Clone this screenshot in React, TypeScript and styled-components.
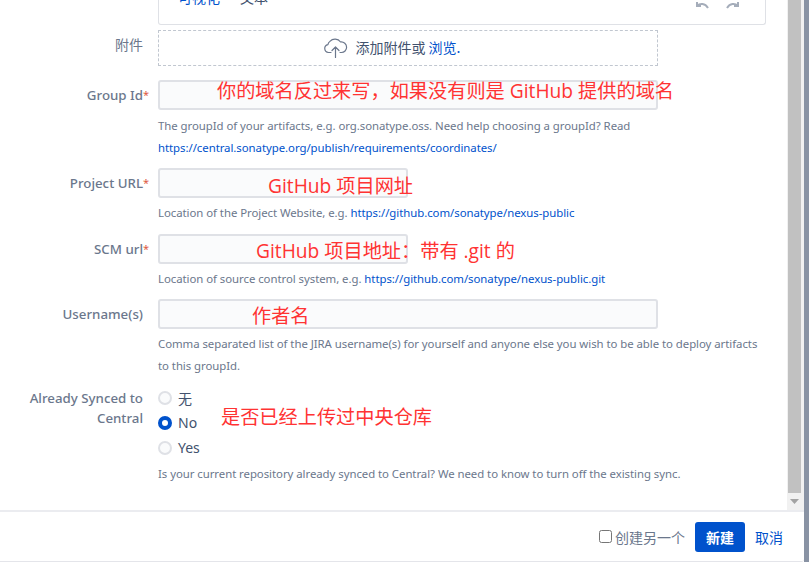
import React from "react";
import styled, { createGlobalStyle } from "styled-components";

const Global = createGlobalStyle`
  html, body { margin: 0; padding: 0; background: #fff; overflow: hidden; }
  body { font-family: "Noto Sans", "Noto Sans CJK SC", sans-serif; }
`;
const Page = styled.div`
  width: 809px; height: 562px; display: flex; overflow: hidden; background: #fff;
`;
const Dialog = styled.div`
  width: 804px; height: 562px; flex: none; display: flex; flex-direction: column; background: #fff;
  box-sizing: border-box; border-bottom: 1px solid #e4e5ea; border-bottom-right-radius: 3px;
`;
const Backdrop = styled.div`flex: 1; background: #8993a4;`;
const Middle = styled.div`flex: 1; min-height: 0; display: flex;`;
const Body = styled.div`
  flex: 1; min-width: 0; overflow: hidden; display: flex; flex-direction: column; position: relative;
`;
const Row = styled.div<{ $mt?: number }>`
  display: grid; grid-template-columns: 143px 1fr; column-gap: 15px; margin-top: ${p => p.$mt ?? 0}px;
`;
const Label = styled.div<{ $pt?: number }>`
  text-align: right; font-size: 13.3px; color: #6b778c; line-height: 20px;
  padding-top: ${p => p.$pt ?? 0}px;
  font-family: "Noto Sans", "Noto Sans CJK SC", sans-serif;
  font-weight: 500;
`;
const PlainLabel = styled(Label)`
  font-size: 14px; font-weight: 400; font-family: "Noto Sans CJK SC", sans-serif;
`;
const Req = styled.span`position: absolute; color: #de5a42; font-weight: 400; font-size: 11px;`;
const Field = styled.div<{ $pt?: number }>`min-width: 0; padding-top: ${p => p.$pt ?? 0}px;`;
const Editor = styled.div`
  width: 608px; height: 25px; box-sizing: border-box; border: 1px solid #dfe1e6; border-top: 0;
  border-radius: 0 0 3px 3px; display: flex; align-items: flex-end; padding: 0 25px 12px 19px;
  font-size: 14px; line-height: 18px; color: #42526e; overflow: hidden;
`;
const EditorTab = styled.span<{ $active?: boolean }>`
  color: ${p => (p.$active ? "#0052cc" : "#42526e")}; margin-right: 20px;
  font-family: "Noto Sans CJK SC", sans-serif; position: relative; top: -6px;
`;
const EditorTools = styled.span`margin-left: auto; display: flex; gap: 15px; position: relative; top: -1px;`;
const Drop = styled.div`
  width: 500px; height: 36px; box-sizing: border-box; border: 1px dashed #c1c7d0; display: flex;
  align-items: center; justify-content: center; margin-top: 5px; padding: 0 32px 2px 0; font-size: 14px; color: #42526e;
  font-family: "Noto Sans CJK SC", sans-serif; gap: 7px;
`;
const Link = styled.a`color: #0052cc; text-decoration: none;`;
const Input = styled.div<{ $w: number }>`
  width: ${p => p.$w}px; height: 30px; box-sizing: border-box; background: #fafbfc;
  border: 2px solid #dfe1e6; border-radius: 3px;
`;
const Hint = styled.div<{ $mt?: number }>`
  font-size: 11.4px; line-height: 21.5px; color: #6b778c; margin-top: ${p => p.$mt ?? 4}px; width: 604px;
  font-family: "Noto Sans", sans-serif; letter-spacing: -0.05px;
`;
const Radios = styled.div`display: flex; flex-direction: column;`;
const RadioRow = styled.div`
  height: 25px; display: flex; align-items: center; gap: 6px; font-size: 14px; color: #42526e;
  font-family: "Noto Sans", "Noto Sans CJK SC", sans-serif;
`;
const Dot = styled.span<{ $on?: boolean }>`
  width: 14px; height: 14px; box-sizing: border-box; border-radius: 50%; flex: none;
  border: ${p => (p.$on ? "4px solid #0052cc" : "2px solid #dfe1e6")};
  background: ${p => (p.$on ? "#fff" : "#fafbfc")};
`;
const Annotation = styled.div<{ $x: number; $y: number }>`
  position: absolute; left: ${p => p.$x}px; top: ${p => p.$y}px; color: #ff3333; font-size: 19.2px;
  line-height: 24px; white-space: nowrap; font-family: "Open Sans", "Noto Sans CJK SC", sans-serif;
`;
const Scrollbar = styled.div`
  width: 17px; flex: none; background: #f1f1f1; display: flex; flex-direction: column; align-items: stretch;
`;
const Thumb = styled.div`flex: 1; background: #c1c1c1; margin: 0 3px 0 1px;`;
const Arrow = styled.div`height: 17px; padding-right: 2px; display: flex; align-items: center; justify-content: center;`;
const Footer = styled.div`
  height: 51px; flex: none; box-sizing: border-box; border-top: 2px solid #ebecf0; display: flex; align-items: center;
  justify-content: flex-end; padding: 0 21px 0 0; font-family: "Noto Sans CJK SC", sans-serif; font-size: 14px;
`;
const Check = styled.span`
  width: 13px; height: 13px; box-sizing: border-box; border: 1px solid #767676; border-radius: 2.5px; margin-right: 3px; background: #fff;
`;
const CheckText = styled.span`color: #6b778c; margin-right: 10px;`;
const Primary = styled.div`
  width: 50px; height: 30px; border-radius: 3px; background: #0052cc; color: #fff; font-weight: 700;
  display: flex; align-items: center; justify-content: center; margin-right: 10px;
`;

const Cloud = () => (
  <svg width="25" height="21" viewBox="0 0 25 21" fill="none" stroke="#6b778c" strokeWidth="1.2" strokeLinecap="round" strokeLinejoin="round">
    <path d="M8 15.5H5.5a4 4 0 0 1-.6-7.9 5.5 5.5 0 0 1 2-3.2A7 7 0 0 1 17.6 5a5.4 5.4 0 0 1 6 5.3 5.2 5.2 0 0 1-5.2 5.2H17" />
    <path d="M12.5 20.5V10.5M9 13.5l3.5-3.5 3.5 3.5" />
  </svg>
);
const Undo = ({ flip }: { flip?: boolean }) => (
  <svg width="15" height="10" viewBox="0 0 15 10" fill="none" stroke="#a5adba" strokeWidth="2" style={flip ? { transform: "scaleX(-1)" } : undefined}>
    <path d="M2 1v4h4M2 5c3-3 8-3 11 2" />
  </svg>
);

export default function App() {
  return (
    <Page>
      <Global />
      <Dialog>
        <Middle>
          <Body>
            <Row>
              <div />
              <Editor>
                <EditorTab $active>可视化</EditorTab>
                <EditorTab>文本</EditorTab>
                <EditorTools><Undo /><Undo flip /></EditorTools>
              </Editor>
            </Row>
            <Row>
              <PlainLabel $pt={9}>附件</PlainLabel>
              <Drop><Cloud /><span>添加附件或 <Link>浏览.</Link></span></Drop>
            </Row>
            <Row $mt={14}>
              <Label $pt={5}>Group Id<Req>*</Req></Label>
              <Field>
                <Input $w={500} />
                <Hint $mt={5}>The groupId of your artifacts, e.g. org.sonatype.oss. Need help choosing a groupId? Read<br /><Link>https://central.sonatype.org/publish/requirements/coordinates/</Link></Hint>
              </Field>
            </Row>
            <Row $mt={10}>
              <Label $pt={5}>Project URL<Req>*</Req></Label>
              <Field>
                <Input $w={250} />
                <Hint>Location of the Project Website, e.g. <Link>https://github.com/sonatype/nexus-public</Link></Hint>
              </Field>
            </Row>
            <Row $mt={10}>
              <Label $pt={5}>SCM url<Req>*</Req></Label>
              <Field>
                <Input $w={250} />
                <Hint>Location of source control system, e.g. <Link>https://github.com/sonatype/nexus-public.git</Link></Hint>
              </Field>
            </Row>
            <Row $mt={10}>
              <Label $pt={5}>Username(s)</Label>
              <Field>
                <Input $w={500} />
                <Hint>Comma separated list of the JIRA username(s) for yourself and anyone else you wish to be able to deploy artifacts to this groupId.</Hint>
              </Field>
            </Row>
            <Row $mt={3}>
              <Label $pt={9}>Already Synced to<br />Central</Label>
              <Field $pt={6}>
                <Radios>
                  <RadioRow><Dot />无</RadioRow>
                  <RadioRow><Dot $on />No</RadioRow>
                  <RadioRow><Dot />Yes</RadioRow>
                </Radios>
                <Hint $mt={3}>Is your current repository already synced to Central? We need to know to turn off the existing sync.</Hint>
              </Field>
            </Row>
            <Annotation $x={217} $y={79}>你的域名反过来写，如果没有则是 GitHub 提供的域名</Annotation>
            <Annotation $x={268} $y={174}>GitHub 项目网址</Annotation>
            <Annotation $x={256} $y={239}>GitHub 项目地址：带有 .git 的</Annotation>
            <Annotation $x={252} $y={304}>作者名</Annotation>
            <Annotation $x={221} $y={405}>是否已经上传过中央仓库</Annotation>
          </Body>
          <Scrollbar>
            <Thumb />
            <Arrow>
              <svg width="9" height="5" viewBox="0 0 9 5"><path d="M0 0h9L4.5 5z" fill="#a3a3a3" /></svg>
            </Arrow>
          </Scrollbar>
        </Middle>
        <Footer>
          <Check />
          <CheckText>创建另一个</CheckText>
          <Primary>新建</Primary>
          <Link>取消</Link>
        </Footer>
      </Dialog>
      <Backdrop />
    </Page>
  );
}
